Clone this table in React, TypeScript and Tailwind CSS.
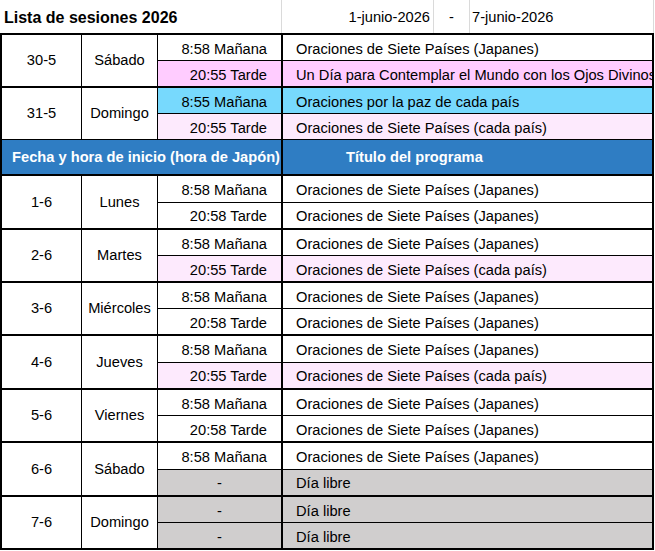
import React from "react";

type Row = { time: string; title: string; bg?: string };
type Group = { date: string; day: string; h: string; rows: Row[] };

const JP = "Oraciones de Siete Países (Japanes)";
const CP = "Oraciones de Siete Países (cada país)";
const PINK = "bg-[#fdeafd]";
const GRAY = "bg-[#d0cece]";

const before: Group[] = [
    {
        date: "30-5",
        day: "Sábado",
        h: "h-[53px]",
        rows: [
            { time: "8:58 Mañana", title: JP },
            { time: "20:55 Tarde", title: "Un Día para Contemplar el Mundo con los Ojos Divinos", bg: "bg-[#ffccff]" },
        ],
    },
    {
        date: "31-5",
        day: "Domingo",
        h: "h-[52px]",
        rows: [
            { time: "8:55 Mañana", title: "Oraciones por la paz de cada país", bg: "bg-[#77d9fd]" },
            { time: "20:55 Tarde", title: CP, bg: PINK },
        ],
    },
];

const after: Group[] = [
    { date: "1-6", day: "Lunes", h: "h-[54px]", rows: [{ time: "8:58 Mañana", title: JP }, { time: "20:58 Tarde", title: JP }] },
    { date: "2-6", day: "Martes", h: "h-[53px]", rows: [{ time: "8:58 Mañana", title: JP }, { time: "20:55 Tarde", title: CP, bg: PINK }] },
    { date: "3-6", day: "Miércoles", h: "h-[53px]", rows: [{ time: "8:58 Mañana", title: JP }, { time: "20:58 Tarde", title: JP }] },
    { date: "4-6", day: "Jueves", h: "h-[54px]", rows: [{ time: "8:58 Mañana", title: JP }, { time: "20:55 Tarde", title: CP, bg: PINK }] },
    { date: "5-6", day: "Viernes", h: "h-[53px]", rows: [{ time: "8:58 Mañana", title: JP }, { time: "20:58 Tarde", title: JP }] },
    { date: "6-6", day: "Sábado", h: "h-[54px]", rows: [{ time: "8:58 Mañana", title: JP }, { time: "-", title: "Día libre", bg: GRAY }] },
    { date: "7-6", day: "Domingo", h: "h-[53px]", rows: [{ time: "-", title: "Día libre", bg: GRAY }, { time: "-", title: "Día libre", bg: GRAY }] },
];

function GroupRow({ g, thin }: { g: Group; thin?: boolean }) {
    return (
        <div className={`flex ${g.h} ${thin ? "border-b" : "border-b-2"} border-black`}>
            <div className="w-[80px] shrink-0 border-r border-black flex items-center justify-center">{g.date}</div>
            <div className="w-[76px] shrink-0 border-r border-black flex items-center justify-center">{g.day}</div>
            <div className="flex-1 min-w-0 flex flex-col">
                {g.rows.map((r, i) => (
                    <div key={i} className={`flex flex-1 min-h-0 ${i === 0 ? "border-b border-black" : ""} ${r.bg ?? ""}`}>
                        <div
                            className={`w-[123px] shrink-0 flex items-center pt-[3px] ${r.time === "-" ? "justify-center" : "justify-end pr-[14px]"}`}
                        >
                            {r.time}
                        </div>
                        <div className="flex-1 min-w-0 border-l-2 border-black pl-[13px] pt-[3px] flex items-center overflow-hidden whitespace-nowrap">
                            {r.title}
                        </div>
                    </div>
                ))}
            </div>
        </div>
    );
}

export default function App() {
    return (
        <div
            className="w-[655px] h-[551px] bg-white text-black text-[14.67px] leading-none overflow-hidden"
            style={{ fontFamily: '"Liberation Sans", Arial, sans-serif' }}
        >
            {/* title row */}
            <div className="flex h-[33px]">
                <div className="w-[282px] shrink-0 border-r border-[#dadada] pl-[4px] pt-[2px] flex items-center text-[16px] font-bold">
                    Lista de sesiones 2026
                </div>
                <div className="w-[152px] shrink-0 border-r border-[#dadada] flex items-center justify-end pr-[3px] pt-[2px]">1-junio-2026</div>
                <div className="w-[36px] shrink-0 border-r border-[#dadada] flex items-center justify-center pt-[2px]">-</div>
                <div className="w-[184px] shrink-0 border-r border-[#dadada] flex items-center pl-[2px] pt-[2px]">7-junio-2026</div>
            </div>

            {/* schedule */}
            <div className="w-[654px] border-t-2 border-l-2 border-r-2 border-black">
                {before.map((g, i) => (
                    <GroupRow key={g.date} g={g} thin={i === before.length - 1} />
                ))}

                <div className="flex h-[36px] bg-[#2f7dc3] text-white font-bold border-b-2 border-black">
                    <div className="w-[279px] shrink-0 flex items-center justify-center pl-[9px] whitespace-nowrap">
                        Fecha y hora de inicio (hora de Japón)
                    </div>
                    <div className="flex-1 border-l-2 border-black flex items-center pl-[63px]">Título del programa</div>
                </div>

                {after.map((g) => (
                    <GroupRow key={g.date} g={g} />
                ))}
            </div>
        </div>
    );
}
